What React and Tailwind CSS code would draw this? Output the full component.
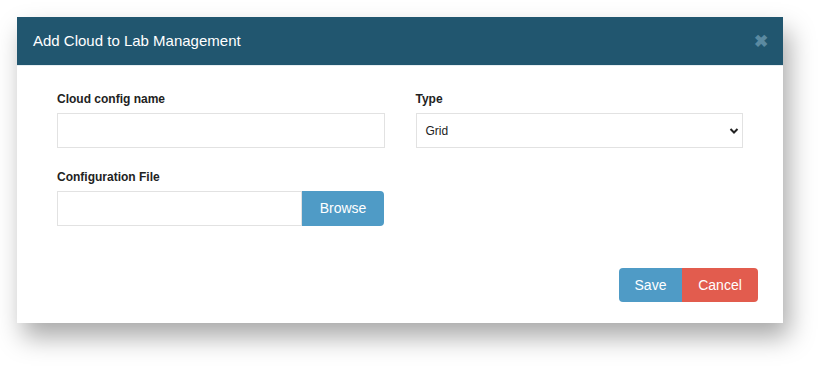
export default function App() {
  return (
    <div className="h-[370px] w-[831px] bg-white pl-[17px] pt-[17px]" style={{ fontFamily: '"Liberation Sans", Arial, sans-serif' }}>
      <div className="w-[766px] bg-white shadow-[6px_14px_24px_rgba(0,0,0,0.34)]">
        <div className="flex h-[48px] items-center justify-between bg-[#21566f] pl-4 pr-[15px]">
          <span className="text-[15px] text-white">Add Cloud to Lab Management</span>
          <span className="text-[17px] font-bold leading-none text-[#5b8aa1]">✖</span>
        </div>
        <div className="border-t border-[#e6eef2] px-10 pt-[24px]">
          <div className="grid grid-cols-2 gap-x-[31px]">
            <div>
              <label className="block text-[12px] font-bold text-[#222]">Cloud config name</label>
              <input className="mt-[5px] h-[35px] w-full border border-[#e2e2e2] bg-white px-3 text-[12px] outline-none" />
            </div>
            <div>
              <label className="block text-[12px] font-bold text-[#222]">Type</label>
              <div className="relative mt-[5px] flex h-[35px] w-full items-center border border-[#e2e2e2] bg-white px-[9px] text-[12px] text-[#222]">
                Grid
                <svg className="absolute right-[3px] top-[13px]" width="10" height="8" viewBox="0 0 10 8">
                  <path d="M1.5 2 L5 5.5 L8.5 2" fill="none" stroke="#222" strokeWidth="2" />
                </svg>
              </div>
            </div>
          </div>
          <div className="mt-[20px] w-[327px]">
            <label className="block text-[12px] font-bold text-[#222]">Configuration File</label>
            <div className="mt-[5px] flex h-[35px]">
              <input className="h-full w-[245px] border border-[#e2e2e2] bg-white px-3 outline-none" />
              <button className="h-full flex-1 rounded-r-[4px] bg-[#4f9bc6] text-[14px] text-white">Browse</button>
            </div>
          </div>
          <div className="flex justify-end pb-[21px] pt-[42px]">
            <div className="mr-[-15px] flex h-[34px]">
              <button className="w-[63px] rounded-l-[4px] bg-[#4f9bc6] text-[14px] text-white">Save</button>
              <button className="w-[76px] rounded-r-[4px] bg-[#e25c4e] text-[14px] text-white">Cancel</button>
            </div>
          </div>
        </div>
      </div>
    </div>
  );
}
